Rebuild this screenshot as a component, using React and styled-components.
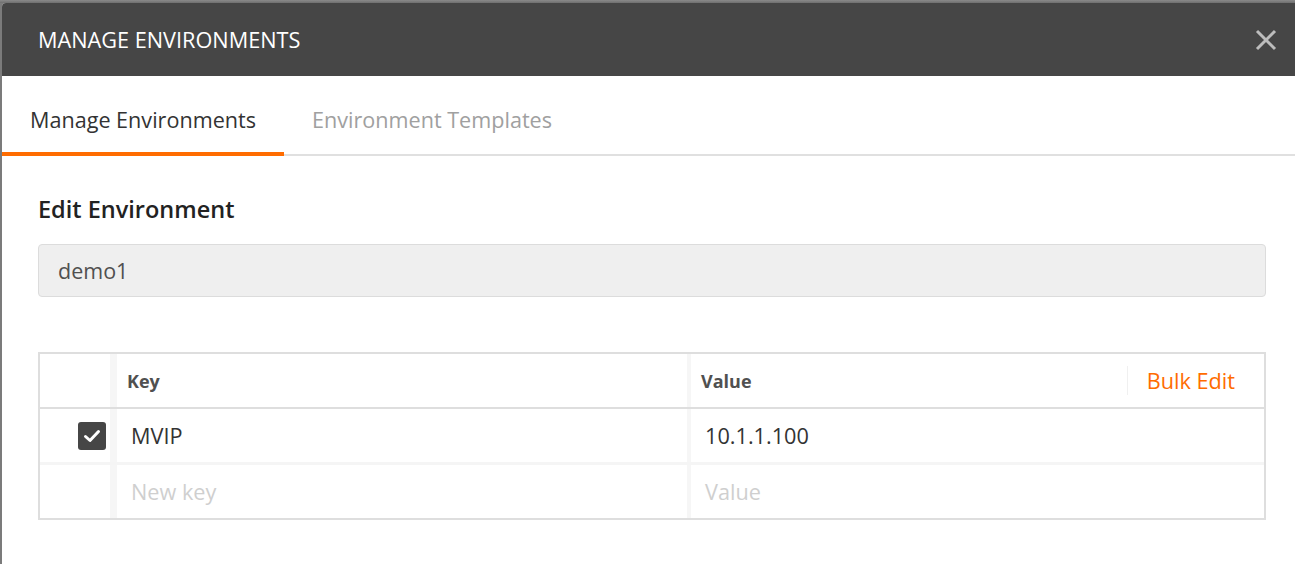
import React from 'react'
import styled, { createGlobalStyle } from 'styled-components'

const GlobalStyle = createGlobalStyle`
    html, body {
        margin: 0;
        padding: 0;
        background: #7b7b7b;
        font-family: 'Open Sans', 'Noto Sans', sans-serif;
    }
`

const Backdrop = styled.div`
    height: 3px;
    background: linear-gradient(#8a8a8a, #6f6f6f);
`

const Modal = styled.div`
    margin-left: 2px;
    background: #ffffff;
    border-top-left-radius: 4px;
    overflow: hidden;
    height: 561px;
`

const Header = styled.div`
    height: 73px;
    background: #464646;
    display: flex;
    align-items: center;
    justify-content: space-between;
    padding: 0 18px 0 36px;
`

const Title = styled.h1`
    margin: 0;
    color: #ffffff;
    font-size: 21.7px;
    font-weight: 400;
`

const CloseButton = styled.button`
    border: 0;
    background: transparent;
    padding: 0;
    width: 22px;
    height: 22px;
    display: flex;
    cursor: pointer;
`

const Tabs = styled.div`
    display: flex;
    height: 78px;
    border-bottom: 2px solid #e0e0e0;
`

const Tab = styled.div`
    display: flex;
    align-items: center;
    padding: 10px 28px 0;
    font-size: 21.6px;
    color: ${({ active }) => (active ? '#333333' : '#a0a0a0')};
    border-bottom: 4px solid ${({ active }) => (active ? '#ff6c00' : 'transparent')};
    margin-bottom: -2px;
`

const Body = styled.div`
    padding: 36px 29px 0 36px;
`

const SectionTitle = styled.h2`
    margin: 0;
    font-size: 23.5px;
    font-weight: 600;
    color: #222222;
    line-height: 34px;
`

const NameInput = styled.div`
    margin-top: 18px;
    height: 51px;
    background: #efefef;
    border: 1px solid #dcdcdc;
    border-radius: 4px;
    display: flex;
    align-items: center;
    padding-left: 19px;
    font-size: 21.5px;
    color: #505050;
`

const Table = styled.div`
    margin-top: 55px;
    border: 2px solid #dedede;
`

const Row = styled.div`
    display: grid;
    grid-template-columns: 70px 1fr 1fr;
    height: 53px;
    border-bottom: ${({ head, last }) =>
        head ? '2px solid #dedede' : last ? 'none' : '3px solid #f5f5f5'};
`

const CheckCell = styled.div`
    display: flex;
    align-items: center;
    justify-content: flex-end;
    padding-right: 4px;
`

const Cell = styled.div`
    display: flex;
    align-items: center;
    border-left: ${({ wide }) => (wide ? '7px' : '4px')} solid #f6f6f6;
    padding-left: ${({ head }) => (head ? '10px' : '14px')};
    font-size: ${({ head }) => (head ? '18px' : '21.7px')};
    font-weight: ${({ head }) => (head ? 700 : 400)};
    color: ${({ head, placeholder }) =>
        head ? '#505050' : placeholder ? '#cfcfcf' : '#333333'};
`

const HeadLabel = styled.span`
    flex: 1;
`

const BulkEdit = styled.span`
    align-self: stretch;
    display: flex;
    align-items: center;
    margin: 12px 0;
    padding: 0 29px 0 19px;
    border-left: 1px solid #f0f0f0;
    color: #ff6c00;
    font-size: 21.7px;
    font-weight: 400;
`

const CheckBox = styled.span`
    width: 28px;
    height: 28px;
    border-radius: 3px;
    background: #464646;
    display: flex;
    align-items: center;
    justify-content: center;
`

const CloseIcon = () => (
    <svg width="22" height="22" viewBox="0 0 22 22">
        <path d="M2 2 L20 20 M20 2 L2 20" stroke="#bdbdbd" strokeWidth="3" />
    </svg>
)

const CheckIcon = () => (
    <svg width="18" height="16" viewBox="0 0 18 16">
        <path
            d="M2.5 8.5 L7 12.5 L15.5 3.5"
            fill="none"
            stroke="#ffffff"
            strokeWidth="3"
            strokeLinecap="round"
            strokeLinejoin="round"
        />
    </svg>
)

export default function App() {
    return (
        <>
            <GlobalStyle />
            <Backdrop />
            <Modal>
                <Header>
                    <Title>MANAGE ENVIRONMENTS</Title>
                    <CloseButton aria-label="Close">
                        <CloseIcon />
                    </CloseButton>
                </Header>
                <Tabs>
                    <Tab active>Manage Environments</Tab>
                    <Tab>Environment Templates</Tab>
                </Tabs>
                <Body>
                    <SectionTitle>Edit Environment</SectionTitle>
                    <NameInput>demo1</NameInput>
                    <Table>
                        <Row head>
                            <CheckCell />
                            <Cell head wide>
                                Key
                            </Cell>
                            <Cell head>
                                <HeadLabel>Value</HeadLabel>
                                <BulkEdit>Bulk Edit</BulkEdit>
                            </Cell>
                        </Row>
                        <Row>
                            <CheckCell>
                                <CheckBox>
                                    <CheckIcon />
                                </CheckBox>
                            </CheckCell>
                            <Cell wide>MVIP</Cell>
                            <Cell>10.1.1.100</Cell>
                        </Row>
                        <Row last>
                            <CheckCell />
                            <Cell wide placeholder>
                                New key
                            </Cell>
                            <Cell placeholder>Value</Cell>
                        </Row>
                    </Table>
                </Body>
            </Modal>
        </>
    )
}
